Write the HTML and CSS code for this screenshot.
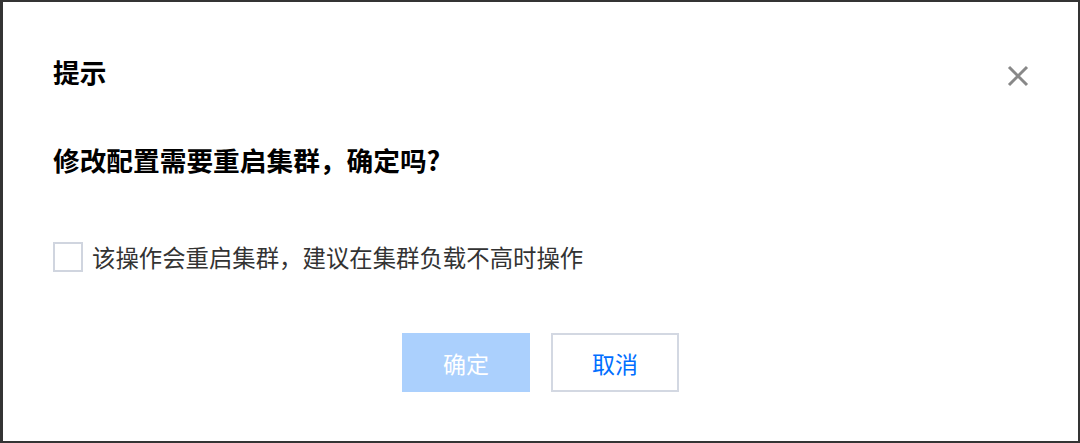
FILE: index.html
```html
<!DOCTYPE html>
<html lang="zh-CN">
<head>
    <meta charset="UTF-8">
    <meta name="viewport" content="width=device-width, initial-scale=1.0">
    <title>提示</title>
    <link rel="stylesheet" href="styles.css">
</head>
<body>
    <div class="dialog">
        <div class="dialog-header">
            <h2 class="dialog-title">提示</h2>
            <button class="close-btn" type="button" aria-label="关闭">
                <svg width="22" height="22" viewBox="0 0 22 22">
                    <path d="M2 2 L20 20 M20 2 L2 20" stroke="#888" stroke-width="3" fill="none"/>
                </svg>
            </button>
        </div>
        <h3 class="dialog-question">修改配置需要重启集群，确定吗?</h3>
        <label class="check-row">
            <span class="check-box"></span>
            <span class="check-text">该操作会重启集群，建议在集群负载不高时操作</span>
        </label>
        <div class="dialog-footer">
            <button class="btn btn-primary" type="button" disabled>确定</button>
            <button class="btn btn-default" type="button">取消</button>
        </div>
    </div>
</body>
</html>
```

FILE: styles.css
```css
* {
    margin: 0;
    padding: 0;
    box-sizing: border-box;
    font-family: "Noto Sans CJK SC", "Noto Sans", sans-serif;
}

html, body {
    height: 100%;
}

body {
    background: #343434;
    padding: 2px 2px 2px 3px;
}

.dialog {
    height: 100%;
    background: #fff;
    padding: 50px 48px 0 50px;
}

.dialog-header {
    display: flex;
    justify-content: space-between;
    align-items: center;
    height: 40px;
}

.dialog-title {
    font-size: 26.7px;
    line-height: 40px;
    font-weight: 700;
    color: #000;
}

.close-btn {
    border: none;
    background: none;
    width: 22px;
    height: 22px;
    margin-top: 8px;
    margin-right: 1px;
    display: flex;
}

.dialog-question {
    margin-top: 48px;
    font-size: 26.7px;
    line-height: 40px;
    font-weight: 700;
    color: #000;
}

.check-row {
    display: flex;
    align-items: center;
    height: 40px;
    margin-top: 57px;
}

.check-box {
    width: 30px;
    height: 30px;
    border: 2px solid #d0d5df;
    background: #fff;
    margin-right: 9px;
}

.check-text {
    font-size: 23.4px;
    line-height: 40px;
    color: #333;
}

.dialog-footer {
    display: flex;
    justify-content: center;
    gap: 21px;
    margin-top: 56px;
    padding-right: 2px;
}

.btn {
    width: 128px;
    height: 59px;
    font-size: 23px;
    border: none;
    cursor: pointer;
}

.btn-primary {
    background: #abd0fd;
    color: #fff;
}

.btn-default {
    background: #fff;
    border: 2px solid #d3d8e2;
    color: #006eff;
}
```
